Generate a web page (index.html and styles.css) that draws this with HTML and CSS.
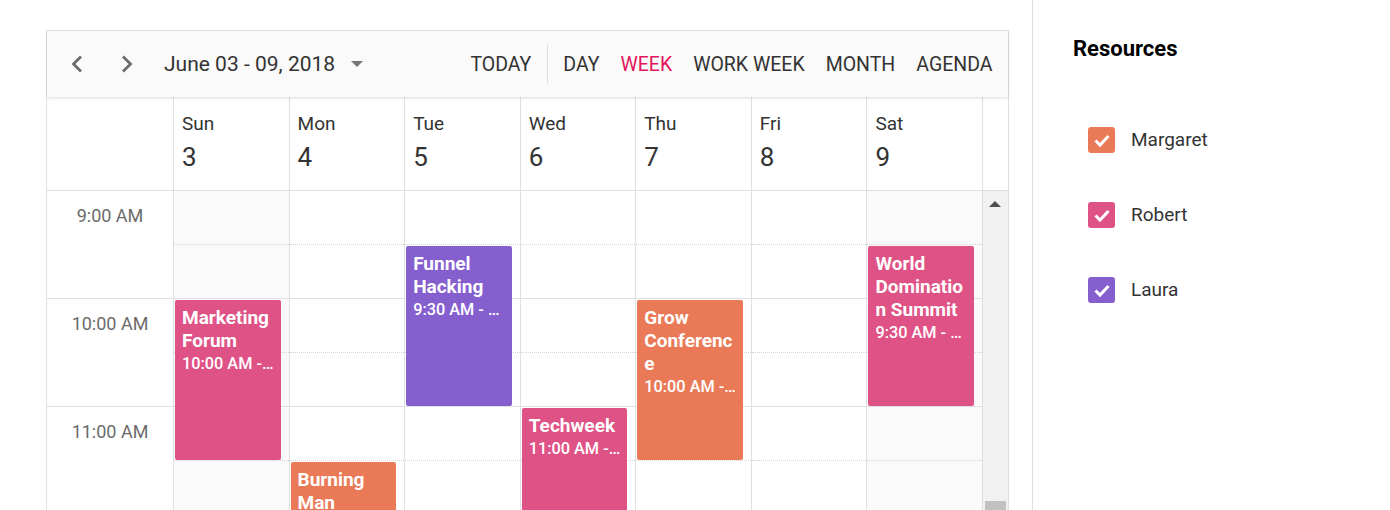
FILE: index.html
```html
<!DOCTYPE html>
<html lang="en">
<head>
<meta charset="utf-8">
<title>Scheduler - Resources</title>
<link rel="stylesheet" href="styles.css">
</head>
<body>
<div class="page">
  <div class="main">
    <div class="scheduler">
      <div class="toolbar">
        <button class="nav-btn" aria-label="Previous">
          <svg width="14" height="18" viewBox="0 0 14 18"><path d="M11 1.5 L3.5 9 L11 16.5" fill="none" stroke="#6b6b6b" stroke-width="2.8"/></svg>
        </button>
        <button class="nav-btn" aria-label="Next">
          <svg width="14" height="18" viewBox="0 0 14 18"><path d="M3 1.5 L10.5 9 L3 16.5" fill="none" stroke="#6b6b6b" stroke-width="2.8"/></svg>
        </button>
        <div class="date-range">June 03 - 09, 2018<span class="caret"></span></div>
        <div class="views">
          <span class="view">TODAY</span>
          <span class="sep"></span>
          <span class="view">DAY</span>
          <span class="view active">WEEK</span>
          <span class="view">WORK WEEK</span>
          <span class="view">MONTH</span>
          <span class="view">AGENDA</span>
        </div>
      </div>
      <div class="header">
        <div class="hcell blank"></div>
        <div class="hcell"><div class="dname">Sun</div><div class="dnum">3</div></div>
        <div class="hcell"><div class="dname">Mon</div><div class="dnum">4</div></div>
        <div class="hcell"><div class="dname">Tue</div><div class="dnum">5</div></div>
        <div class="hcell"><div class="dname">Wed</div><div class="dnum">6</div></div>
        <div class="hcell"><div class="dname">Thu</div><div class="dnum">7</div></div>
        <div class="hcell"><div class="dname">Fri</div><div class="dnum">8</div></div>
        <div class="hcell"><div class="dname">Sat</div><div class="dnum">9</div></div>
        <div class="hpad"></div>
      </div>
      <div class="content">
        <div class="timecol">
          <div class="hour"><span class="tlabel">9:00 AM</span></div>
          <div class="hour"><span class="tlabel">10:00 AM</span></div>
          <div class="hour"><span class="tlabel">11:00 AM</span></div>
          <div class="hour"><span class="tlabel">12:00 PM</span></div>
        </div>
        <div class="day off">
          <div class="slot"></div><div class="slot"></div><div class="slot"></div><div class="slot"></div>
          <div class="slot"></div><div class="slot"></div><div class="slot"></div><div class="slot"></div>
          <div class="event pink" style="top:109px;height:160px"><div class="ev-title">Marketing Forum</div><div class="ev-time">10:00 AM - 11:30 AM</div></div>
        </div>
        <div class="day">
          <div class="slot"></div><div class="slot"></div><div class="slot"></div><div class="slot"></div>
          <div class="slot"></div><div class="slot"></div><div class="slot"></div><div class="slot"></div>
          <div class="event orange" style="top:271px;height:160px"><div class="ev-title">Burning Man</div><div class="ev-time">11:30 AM - 1:00 PM</div></div>
        </div>
        <div class="day">
          <div class="slot"></div><div class="slot"></div><div class="slot"></div><div class="slot"></div>
          <div class="slot"></div><div class="slot"></div><div class="slot"></div><div class="slot"></div>
          <div class="event purple" style="top:55px;height:160px"><div class="ev-title">Funnel Hacking</div><div class="ev-time">9:30 AM - 11:00 AM</div></div>
        </div>
        <div class="day">
          <div class="slot"></div><div class="slot"></div><div class="slot"></div><div class="slot"></div>
          <div class="slot"></div><div class="slot"></div><div class="slot"></div><div class="slot"></div>
          <div class="event pink" style="top:217px;height:160px"><div class="ev-title">Techweek</div><div class="ev-time">11:00 AM - 12:30 PM</div></div>
        </div>
        <div class="day">
          <div class="slot"></div><div class="slot"></div><div class="slot"></div><div class="slot"></div>
          <div class="slot"></div><div class="slot"></div><div class="slot"></div><div class="slot"></div>
          <div class="event orange" style="top:109px;height:160px"><div class="ev-title">Grow Conference</div><div class="ev-time">10:00 AM - 11:30 AM</div></div>
        </div>
        <div class="day">
          <div class="slot"></div><div class="slot"></div><div class="slot"></div><div class="slot"></div>
          <div class="slot"></div><div class="slot"></div><div class="slot"></div><div class="slot"></div>
        </div>
        <div class="day off">
          <div class="slot"></div><div class="slot"></div><div class="slot"></div><div class="slot"></div>
          <div class="slot"></div><div class="slot"></div><div class="slot"></div><div class="slot"></div>
          <div class="event pink" style="top:55px;height:160px"><div class="ev-title">World Domination Summit</div><div class="ev-time">9:30 AM - 11:00 AM</div></div>
        </div>
        <div class="scrollbar">
          <span class="sb-arrow"></span>
          <span class="sb-thumb"></span>
        </div>
      </div>
    </div>
  </div>
  <div class="panel">
    <div class="panel-title">Resources</div>
    <ul class="res-list">
      <li class="res"><span class="cb orange"><svg width="26" height="26" viewBox="0 0 26 26"><path d="M6.5 13.5 L11 18 L19.5 9" fill="none" stroke="#fff" stroke-width="3"/></svg></span><span class="res-name">Margaret</span></li>
      <li class="res"><span class="cb pink"><svg width="26" height="26" viewBox="0 0 26 26"><path d="M6.5 13.5 L11 18 L19.5 9" fill="none" stroke="#fff" stroke-width="3"/></svg></span><span class="res-name">Robert</span></li>
      <li class="res"><span class="cb purple"><svg width="26" height="26" viewBox="0 0 26 26"><path d="M6.5 13.5 L11 18 L19.5 9" fill="none" stroke="#fff" stroke-width="3"/></svg></span><span class="res-name">Laura</span></li>
    </ul>
  </div>
</div>
</body>
</html>
```

FILE: styles.css
```css
* { box-sizing: border-box; }
html, body { margin: 0; padding: 0; }
body {
  font-family: Roboto, "Liberation Sans", sans-serif;
  background: #fff;
  color: #333;
  height: 510px;
  overflow: hidden;
}
.page { display: flex; height: 510px; }
.main { width: 1032px; flex: none; padding: 30px 0 0 46px; }
.scheduler {
  width: 963px;
  border: 1px solid #e0e0e0;
  border-bottom: none;
  background: #fff;
}
.toolbar {
  height: 66px;
  background: #fafafa;
  display: flex;
  align-items: center;
  padding: 0 5px 0 10px;
  box-shadow: 0 1px 3px rgba(0,0,0,0.14);
  position: relative;
  z-index: 2;
}
.nav-btn {
  width: 40px;
  height: 40px;
  border: none;
  background: transparent;
  padding: 0;
  margin-right: 10px;
  display: flex;
  align-items: center;
  justify-content: center;
}
.date-range {
  margin-left: 7px;
  font-size: 21px;
  color: #333;
  display: flex;
  align-items: center;
}
.caret {
  width: 0; height: 0;
  margin-left: 16px;
  border-left: 6.5px solid transparent;
  border-right: 6.5px solid transparent;
  border-top: 6px solid #757575;
}
.views { margin-left: auto; display: flex; align-items: center; }
.view { font-size: 19.5px; color: #333; padding: 0 10.5px; }
.view.active { color: #e3165b; }
.sep { width: 1px; height: 38px; background: #dcdcdc; margin: 0 5px; }

.header {
  display: grid;
  grid-template-columns: 127px repeat(7, 1fr) 25px;
  height: 94px;
  border-bottom: 1px solid #e0e0e0;
}
.hcell { border-right: 1px solid #e0e0e0; padding: 15px 0 0 8px; }
.dname { font-size: 19px; line-height: 24px; color: #333; }
.dnum { font-size: 26px; line-height: 30px; margin-top: 6px; color: #333; }

.content {
  display: grid;
  grid-template-columns: 127px repeat(7, 1fr) 25px;
  height: 432px;
}
.timecol { border-right: 1px solid #e0e0e0; }
.hour { height: 108px; border-bottom: 1px solid #e0e0e0; text-align: center; }
.tlabel { display: block; height: 50px; line-height: 50px; font-size: 18px; color: #6b6b6b; }
.day { position: relative; border-right: 1px solid #e0e0e0; background: #fff; }
.day.off { background: #fafafa; }
.slot { height: 54px; border-bottom: 1px dotted #d4d4d4; }
.slot:nth-child(2n) { border-bottom: 1px solid #e0e0e0; }

.event {
  position: absolute;
  left: 1px;
  width: calc(100% - 9px);
  border-radius: 2px;
  color: #fff;
  padding: 6px 7px;
  overflow: hidden;
}
.ev-title { font-size: 19px; font-weight: 700; line-height: 23px; overflow-wrap: anywhere; }
.ev-time { font-size: 16.3px; font-weight: 500; line-height: 23px; white-space: nowrap; overflow: hidden; text-overflow: ellipsis; }
.pink { background: #df5286; }
.orange { background: #ea7a57; }
.purple { background: #865fcf; }

.scrollbar { background: #f1f1f1; display: flex; flex-direction: column; align-items: center; }
.sb-arrow {
  width: 0; height: 0;
  margin-top: 10px;
  border-left: 6px solid transparent;
  border-right: 6px solid transparent;
  border-bottom: 6px solid #505050;
}
.sb-thumb { width: 21px; height: 40px; margin-top: 294px; background: #c1c1c1; }

.panel { flex: 1; border-left: 1px solid #e0e0e0; padding: 36px 0 0 40px; }
.panel-title { font-size: 22px; font-weight: 700; color: #000; line-height: 26px; }
.res-list { list-style: none; margin: 40px 0 0 15px; padding: 0; }
.res { display: flex; align-items: center; height: 75px; }
.cb { width: 27px; height: 26px; border-radius: 3px; display: flex; align-items: center; justify-content: center; }
.res-name { margin-left: 16px; font-size: 19px; color: #333; }
```
